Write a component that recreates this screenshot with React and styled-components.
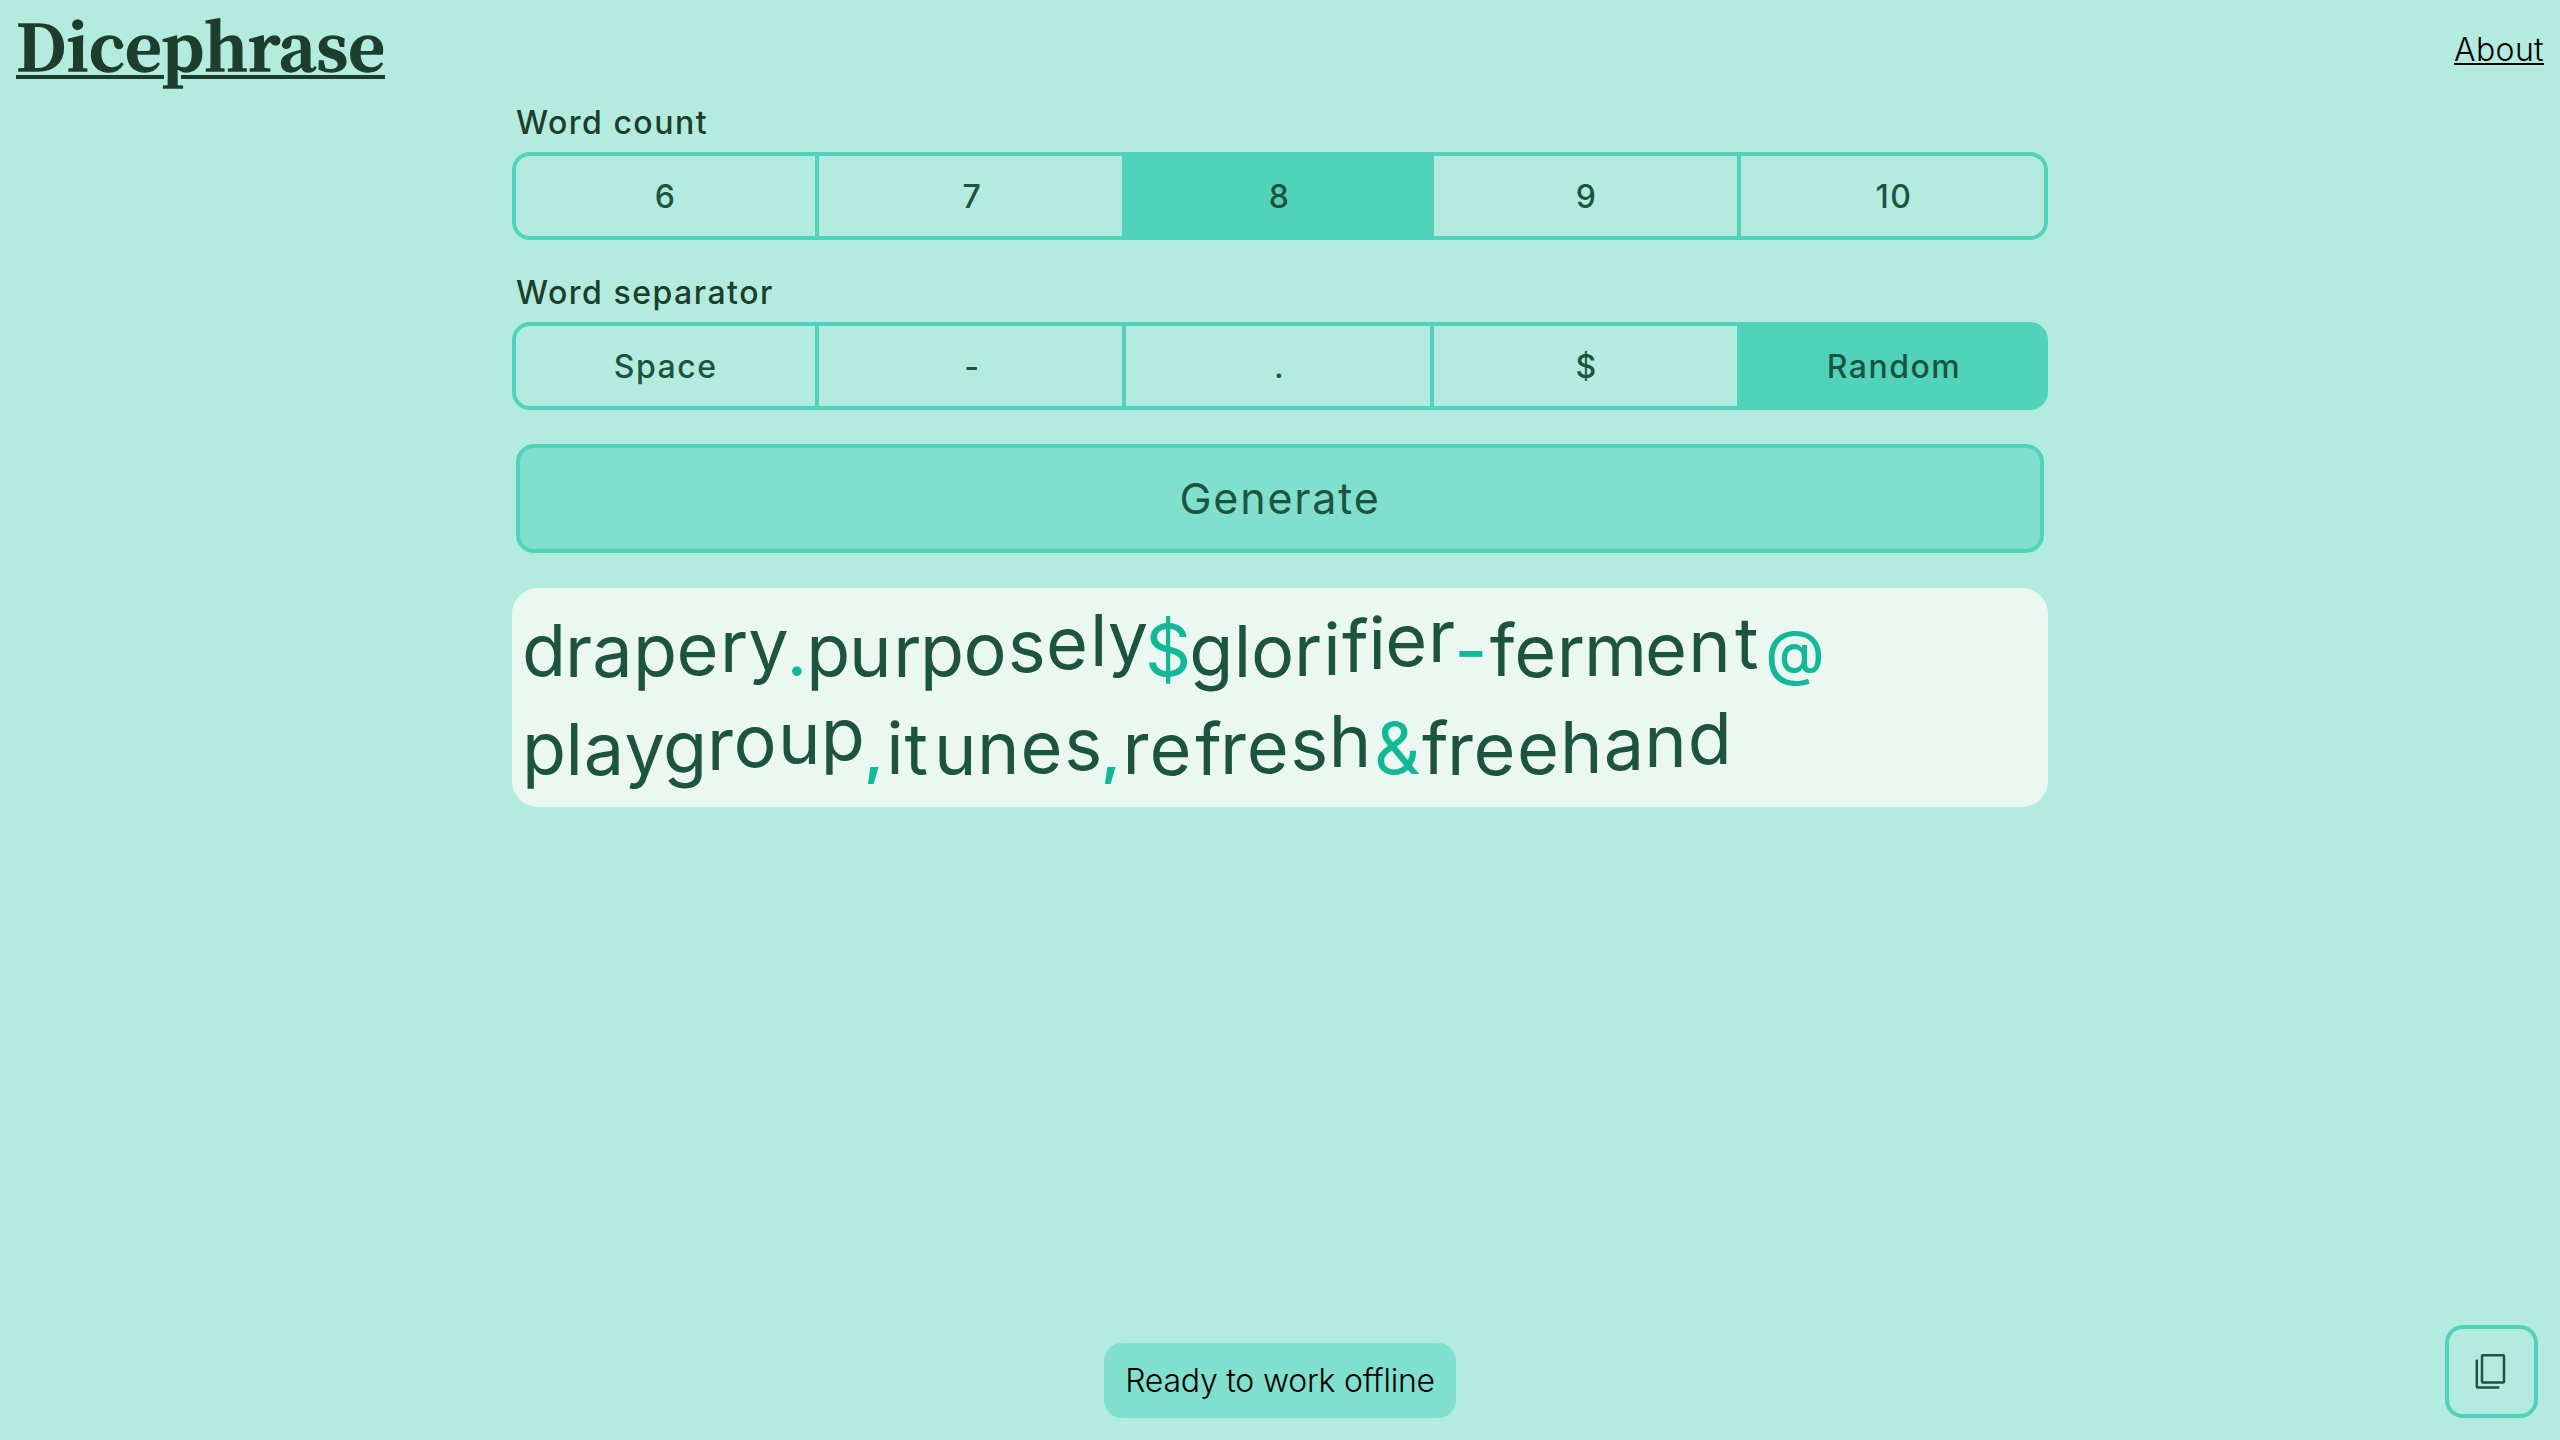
import React, { useState } from "react";
import styled, { createGlobalStyle } from "styled-components";

const color = {
  page: "#b3ecdf",
  border: "#51d2bb",
  button: "#80dfcd",
  panel: "#ebf8f2",
  ink: "#1d543f",
  heading: "#1d3e2c",
  accent: "#12b898",
};

const GlobalStyle = createGlobalStyle`
  *, *::before, *::after { box-sizing: border-box; }
  body {
    margin: 0;
    background: ${color.page};
    font-family: Inter, "Open Sans", sans-serif;
    font-size: 32px;
    line-height: 44px;
  }
`;

const Page = styled.div`
  display: flex;
  flex-direction: column;
  min-height: 100vh;
`;

const Header = styled.header`
  display: flex;
  align-items: center;
  justify-content: space-between;
  height: 100px;
  padding: 0 16px;
`;

const Title = styled.a`
  padding-bottom: 13px;
  color: ${color.heading};
  font-family: "Noto Serif CJK SC", "Liberation Serif", serif;
  font-size: 64px;
  font-weight: 700;
  line-height: 87px;
  letter-spacing: 0.08px;
  -webkit-text-stroke: 1.4px ${color.heading};
  text-decoration: underline;
  text-decoration-thickness: 4px;
  text-underline-offset: 4px;
`;

const AboutLink = styled.a`
  color: #000;
  font-weight: 300;
  letter-spacing: 0.36px;
  text-decoration: underline;
  text-decoration-thickness: 2px;
  text-underline-offset: 2px;
`;

const Main = styled.main`
  display: flex;
  flex-direction: column;
  width: 60%;
  margin: 0 auto;
`;

const Field = styled.section`
  display: flex;
  flex-direction: column;
  gap: 7px;
  margin-bottom: ${(p) => p.$gap}px;
`;

const Label = styled.span`
  padding: 1px 0 0 4px;
  color: ${color.heading};
  font-weight: 500;
  letter-spacing: 1.5px;
`;

const Segments = styled.div`
  display: grid;
  grid-template-columns: repeat(5, 1fr);
  height: 88px;
`;

const Segment = styled.button`
  padding: 2px 0 0 ${(p) => (p.$first ? 0 : 3)}px;
  border: 4px solid ${color.border};
  border-left-width: ${(p) => (p.$first ? 4 : 0)}px;
  border-radius: ${(p) =>
    p.$first ? "18px 0 0 18px" : p.$last ? "0 18px 18px 0" : "0"};
  background: ${(p) => (p.$selected ? color.border : "transparent")};
  color: ${color.ink};
  font: inherit;
  font-weight: 500;
  letter-spacing: 1.5px;
`;

const GenerateButton = styled.button`
  height: 109px;
  margin: 0 4px 35px;
  padding: 0 0 2px;
  border: 4px solid ${color.border};
  border-radius: 18px;
  background: ${color.button};
  color: ${color.ink};
  font: inherit;
  font-size: 43px;
  letter-spacing: 1.8px;
`;

const Panel = styled.output`
  display: block;
  height: 219px;
  padding: 14px 10px 0;
  border-radius: 26px;
  background: ${color.panel};
  color: ${color.ink};
  font-size: 72px;
  line-height: 98px;
`;

const Line = styled.div`
  display: flex;
  height: 98px;
`;

const Letter = styled.span`
  flex: none;
  width: ${(p) => p.$width}px;
  color: ${(p) => (p.$accent ? color.accent : "inherit")};
  font-size: ${(p) => p.$size || 72}px;
  font-weight: ${(p) => p.$weight || 400};
  transform: translateY(${(p) => -p.$lift}px);
  white-space: nowrap;
`;

const Footer = styled.footer`
  display: grid;
  grid-template-columns: 1fr auto 1fr;
  align-items: end;
  margin-top: auto;
  padding: 0 22px 22px;
`;

const Toast = styled.div`
  grid-column: 2;
  width: 352px;
  height: 75px;
  border-radius: 18px;
  background: ${color.button};
  color: #000;
  font-weight: 300;
  line-height: 75px;
  letter-spacing: -0.22px;
  text-align: center;
`;

const CopyButton = styled.button`
  display: flex;
  align-items: center;
  justify-content: center;
  justify-self: end;
  width: 93px;
  height: 93px;
  padding: 0;
  border: 4px solid ${color.border};
  border-radius: 18px;
  background: transparent;
  color: ${color.ink};
`;

const counts = ["6", "7", "8", "9", "10"];
const separators = ["Space", "-", ".", "$", "Random"];

// Every part carries the advance of each letter and how far the wave lifts it.
const lines = [
  [
    { text: "drapery", widths: [43.1, 27.2, 40.7, 43.6, 43.4, 28.4, 38.2], lifts: [1, 0, 0, 1, 2, 5, 7] },
    { text: ".", accent: true, widths: [19.6], lifts: [1] },
    { text: "purposely", widths: [42.9, 44.2, 26.7, 43.6, 44.2, 38.3, 44, 17.7, 37.4], lifts: [1, 0, 0, 1, 2, 5, 8, 11, 14] },
    { text: "$", accent: true, widths: [44.3], lifts: [1] },
    { text: "glorifier", widths: [44.4, 17.2, 43.1, 29.2, 18.9, 26.3, 16.8, 42.7, 26.4], lifts: [1, 0, 0, 1, 2, 5, 8, 11, 15] },
    { text: "-", accent: true, widths: [35.5], lifts: [1] },
    { text: "ferment", widths: [24.5, 42.6, 27.2, 61, 43.1, 46.9, 30.5], lifts: [1, 0, 0, 1, 2, 5, 8] },
    { text: "@", accent: true, size: 60, weight: 500, widths: [64], lifts: [-1] },
  ],
  [
    { text: "playgroup", widths: [43.4, 18.3, 40.9, 38.4, 44, 26.5, 44.5, 42.8, 44], lifts: [1, 0, 0, 1, 2, 5, 8, 11, 15] },
    { text: ",", accent: true, size: 56, weight: 700, widths: [21.5], lifts: [-4] },
    { text: "itunes", widths: [18.3, 29.5, 42.9, 43.6, 43.8, 37.4], lifts: [1, 0, 0, 1, 2, 5] },
    { text: ",", accent: true, size: 56, weight: 700, widths: [20.8], lifts: [-4] },
    { text: "refresh", widths: [27, 45.6, 24.8, 26.9, 43.4, 38.5, 45.4], lifts: [1, 0, 0, 1, 2, 5, 8] },
    { text: "&", accent: true, widths: [47.8], lifts: [1] },
    { text: "freehand", widths: [25, 26.7, 43.3, 43, 43.8, 40.6, 43.6, 44.5], lifts: [1, 0, 0, 1, 2, 5, 8, 11] },
  ],
];

function SegmentedField({ label, options, initial, gap }) {
  const [value, setValue] = useState(initial);
  return (
    <Field $gap={gap}>
      <Label>{label}</Label>
      <Segments>
        {options.map((option, i) => (
          <Segment
            key={option}
            $first={i === 0}
            $last={i === options.length - 1}
            $selected={option === value}
            onClick={() => setValue(option)}
          >
            {option}
          </Segment>
        ))}
      </Segments>
    </Field>
  );
}

function CopyIcon() {
  return (
    <svg width="34" height="36" viewBox="0 0 34 36" fill="none" stroke="currentColor" strokeWidth="2.5">
      <rect x="7" y="1.2" width="22" height="27.2" rx="1" />
      <path d="M1.8 5.5V32.4a1 1 0 0 0 1 1H24.3" />
    </svg>
  );
}

export default function App() {
  return (
    <>
      <GlobalStyle />
      <Page>
        <Header>
          <Title>Dicephrase</Title>
          <AboutLink>About</AboutLink>
        </Header>
        <Main>
          <SegmentedField label="Word count" options={counts} initial="8" gap={30} />
          <SegmentedField label="Word separator" options={separators} initial="Random" gap={34} />
          <GenerateButton>Generate</GenerateButton>
          <Panel>
            {lines.map((parts, row) => (
              <Line key={row}>
                {parts.map((part, n) =>
                  [...part.text].map((letter, i) => (
                    <Letter
                      key={`${n}-${i}`}
                      $accent={part.accent}
                      $size={part.size}
                      $weight={part.weight}
                      $width={part.widths[i]}
                      $lift={part.lifts[i]}
                    >
                      {letter}
                    </Letter>
                  ))
                )}
              </Line>
            ))}
          </Panel>
        </Main>
        <Footer>
          <Toast>Ready to work offline</Toast>
          <CopyButton aria-label="Copy">
            <CopyIcon />
          </CopyButton>
        </Footer>
      </Page>
    </>
  );
}
